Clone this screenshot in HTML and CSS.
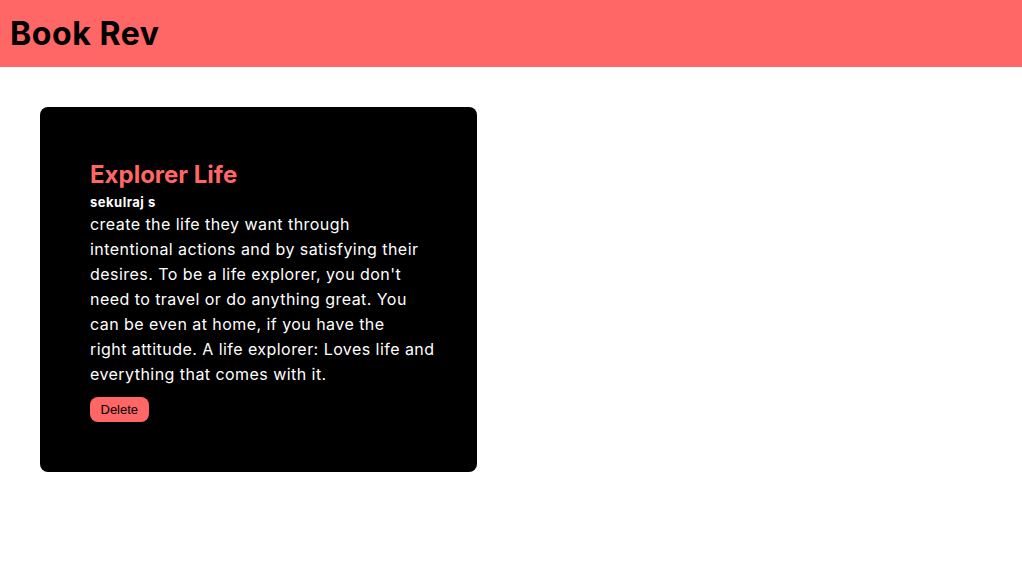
FILE: index.html
```html
<!DOCTYPE html>
<html lang="en">
<head>
<meta charset="utf-8">
<title>Book Rev</title>
<link rel="stylesheet" href="styles.css">
</head>
<body>
<header class="topbar">
  <h1 class="brand">Book Rev</h1>
</header>
<main class="list">
  <article class="card">
    <h2 class="card-title">Explorer Life</h2>
    <p class="card-author">sekulraj s</p>
    <p class="card-body">create the life they want through intentional actions and by satisfying their desires. To be a life explorer, you don't need to travel or do anything great. You can be even at home, if you have the<br>right attitude. A life explorer: Loves life and everything that comes with it.</p>
    <button class="btn-delete" type="button">Delete</button>
  </article>
</main>
</body>
</html>
```

FILE: styles.css
```css
* { box-sizing: border-box; }
body {
  margin: 0;
  font-family: "Inter", "Open Sans", sans-serif;
  background: #ffffff;
}
.topbar {
  height: 67px;
  background: #ff6666;
  display: flex;
  align-items: center;
  padding: 0 10px;
}
.brand {
  margin: 0;
  font-size: 32px;
  font-weight: 700;
  color: #000;
  letter-spacing: 0.6px;
}
.list {
  padding: 40px;
  display: flex;
}
.card {
  width: 437px;
  background: #000;
  border-radius: 8px;
  padding: 50px 41px 50px 50px;
  display: flex;
  flex-direction: column;
  align-items: flex-start;
}
.card-title {
  margin: 0;
  font-size: 24px;
  line-height: 36px;
  font-weight: 700;
  color: #ff6666;
}
.card-author {
  margin: 0;
  font-size: 13px;
  line-height: 19px;
  font-weight: 700;
  color: #fff;
  letter-spacing: 0.5px;
}
.card-body {
  margin: 0 0 10px;
  font-size: 16px;
  line-height: 25px;
  color: #fff;
  letter-spacing: 0.45px;
}
.btn-delete {
  font-family: "Liberation Sans", Arial, sans-serif;
  font-size: 13px;
  height: 25px;
  padding: 0 10.5px;
  border: none;
  border-radius: 8px;
  background: #ff6666;
  color: #000;
}
```
